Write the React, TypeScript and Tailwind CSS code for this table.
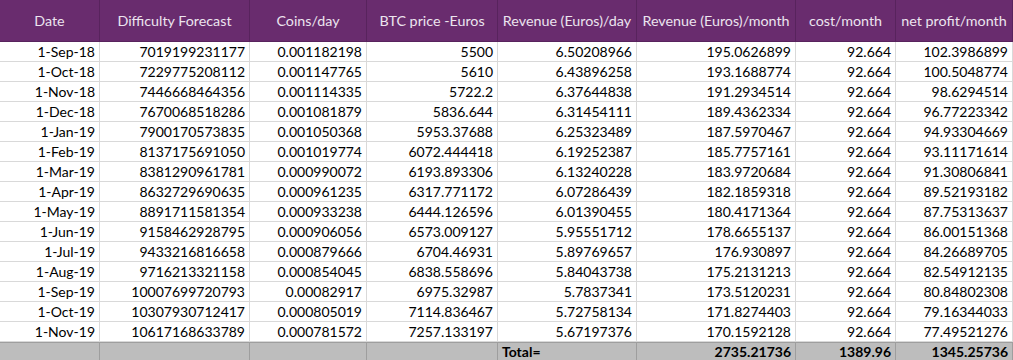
const headers = [
  "Date",
  "Difficulty Forecast",
  "Coins/day",
  "BTC price -Euros",
  "Revenue (Euros)/day",
  "Revenue (Euros)/month",
  "cost/month",
  "net profit/month",
];

const rows: string[][] = [
  ["1-Sep-18", "7019199231177", "0.001182198", "5500", "6.50208966", "195.0626899", "92.664", "102.3986899"],
  ["1-Oct-18", "7229775208112", "0.001147765", "5610", "6.43896258", "193.1688774", "92.664", "100.5048774"],
  ["1-Nov-18", "7446668464356", "0.001114335", "5722.2", "6.37644838", "191.2934514", "92.664", "98.6294514"],
  ["1-Dec-18", "7670068518286", "0.001081879", "5836.644", "6.31454111", "189.4362334", "92.664", "96.77223342"],
  ["1-Jan-19", "7900170573835", "0.001050368", "5953.37688", "6.25323489", "187.5970467", "92.664", "94.93304669"],
  ["1-Feb-19", "8137175691050", "0.001019774", "6072.444418", "6.19252387", "185.7757161", "92.664", "93.11171614"],
  ["1-Mar-19", "8381290961781", "0.000990072", "6193.893306", "6.13240228", "183.9720684", "92.664", "91.30806841"],
  ["1-Apr-19", "8632729690635", "0.000961235", "6317.771172", "6.07286439", "182.1859318", "92.664", "89.52193182"],
  ["1-May-19", "8891711581354", "0.000933238", "6444.126596", "6.01390455", "180.4171364", "92.664", "87.75313637"],
  ["1-Jun-19", "9158462928795", "0.000906056", "6573.009127", "5.95551712", "178.6655137", "92.664", "86.00151368"],
  ["1-Jul-19", "9433216816658", "0.000879666", "6704.46931", "5.89769657", "176.930897", "92.664", "84.26689705"],
  ["1-Aug-19", "9716213321158", "0.000854045", "6838.558696", "5.84043738", "175.2131213", "92.664", "82.54912135"],
  ["1-Sep-19", "10007699720793", "0.00082917", "6975.32987", "5.7837341", "173.5120231", "92.664", "80.84802308"],
  ["1-Oct-19", "10307930712417", "0.000805019", "7114.836467", "5.72758134", "171.8274403", "92.664", "79.16344033"],
  ["1-Nov-19", "10617168633789", "0.000781572", "7257.133197", "5.67197376", "170.1592128", "92.664", "77.49521276"],
];

const totals = ["", "", "", "", "Total=", "2735.21736", "1389.96", "1345.25736"];

export default function App() {
  return (
    <div
      className="w-[1013px] h-[360px] overflow-hidden bg-white text-[14px] text-black"
      style={{ fontFamily: "Lato, 'Liberation Sans', sans-serif" }}
    >
      <div className="grid grid-cols-[100px_150px_117px_131px_139px_159px_100px_117px]">
        {/* header */}
        {headers.map((h) => (
          <div
            key={h}
            className="flex h-[42px] items-center justify-center whitespace-nowrap border-r border-b border-[#58235d] bg-[#692c6e] text-[14.3px] text-[#ece4ef]"
          >
            {h}
          </div>
        ))}

        {/* data rows */}
        {rows.map((r) =>
          r.map((v, i) => (
            <div
              key={r[0] + i}
              className="flex h-5 items-center justify-end whitespace-nowrap border-r border-b border-[#d9d9d9] pr-1 leading-none"
            >
              {v}
            </div>
          ))
        )}

        {/* totals */}
        {totals.map((v, i) => (
          <div
            key={"t" + i}
            className={`flex h-[19px] items-center whitespace-nowrap border-r border-t border-[#9e9e9e] bg-[#bdbdbd] font-bold leading-none ${
              i === 4 ? "justify-start pl-1" : "justify-end pr-1"
            }`}
          >
            {v}
          </div>
        ))}
      </div>
    </div>
  );
}
